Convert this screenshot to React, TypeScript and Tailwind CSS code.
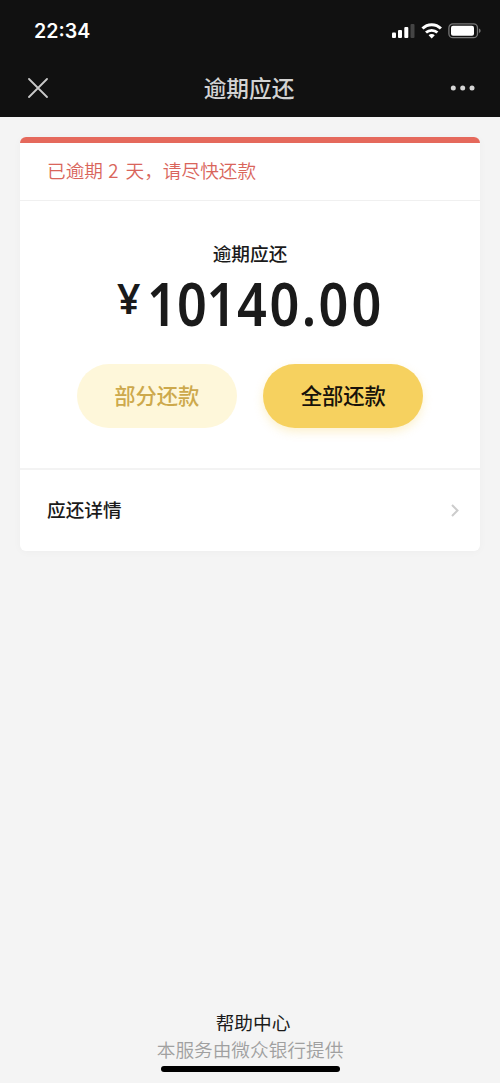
const amount = [
  { char: '1', className: 'w-[30px]' },
  { char: '0', className: 'w-[30px]' },
  { char: '1', className: 'w-[29px]' },
  { char: '4', className: 'w-[32px]' },
  { char: '0', className: 'w-[33px]' },
  { char: '.', className: 'w-[16px]' },
  { char: '0', className: 'w-[33px]' },
  { char: '0', className: 'w-[33px]' },
]

const StatusBar = () => (
  <div className="flex h-[60px] items-center justify-between pl-[34px] pr-[18px] pt-[2px] text-white">
    <span className="pt-[2px] font-['Inter',sans-serif] text-[19.6px] font-semibold leading-none">22:34</span>
    <svg width="92" height="16" viewBox="0 0 92 16" fill="none">
      {/* 信号 */}
      <rect x="2" y="9.5" width="4" height="5.5" rx="1" fill="#fff" />
      <rect x="8" y="7" width="4" height="8" rx="1" fill="#fff" />
      <rect x="14.3" y="4" width="4" height="11" rx="1" fill="#fff" />
      <rect x="20.5" y="1" width="4" height="14" rx="1" fill="#444" />
      {/* Wi-Fi */}
      <path d="M32.5 5.5a13 13 0 0 1 18.4 0" stroke="#fff" strokeWidth="3" />
      <path d="M36 9.6a8.2 8.2 0 0 1 11.4 0" stroke="#fff" strokeWidth="2.8" />
      <path d="M38.6 12.2a4.4 4.4 0 0 1 6.2 0l-3.1 3.2z" fill="#fff" />
      {/* 电池 */}
      <rect x="58.9" y="0.9" width="28.6" height="13.8" rx="4" stroke="#777" strokeWidth="1.3" />
      <rect x="61" y="2.8" width="23" height="10" rx="2" fill="#fff" />
      <path d="M89 5.5c1.2.5 1.6 1.3 1.6 2.3s-.4 1.8-1.6 2.3z" fill="#777" />
    </svg>
  </div>
)

const NavBar = () => (
  <div className="flex h-[57px] items-center justify-between pb-[2px] pl-7 pr-6">
    <svg width="20" height="20" viewBox="0 0 20 20" stroke="#c9c9c9" strokeWidth="1.8" strokeLinecap="round">
      <path d="M1 1l18 18M19 1L1 19" />
    </svg>
    <h1 className="pt-px text-[22.7px] font-medium leading-none text-[#d3d3d3]">逾期应还</h1>
    <svg width="26" height="6" viewBox="0 0 26 6" fill="#d5d5d5">
      <circle cx="3.3" cy="3" r="2.5" />
      <circle cx="12.7" cy="3" r="2.5" />
      <circle cx="22" cy="3" r="2.5" />
    </svg>
  </div>
)

export default function App() {
  return (
    <div className="flex h-[1083px] w-[500px] flex-col bg-[#f4f4f4] font-['Noto_Sans_CJK_SC',sans-serif] text-[#1a1a1a]">
      <header className="bg-[#111111]">
        <StatusBar />
        <NavBar />
      </header>

      <main className="mx-5 mt-5 flex h-[414px] flex-col overflow-hidden rounded-[6px] bg-white shadow-[0_1px_8px_rgba(0,0,0,0.03)]">
        <div className="h-[6px] shrink-0 bg-[#e5695c]" />
        <p className="flex h-[58px] shrink-0 items-center whitespace-pre border-b-[1.5px] border-[#f0f0f0] pb-[2px] pl-[27px] text-[18.67px] font-[350] leading-none text-[#d9655b]">
          已逾期 <span className="ml-[1px] mr-[3px]">2</span> 天，请尽快还款
        </p>

        <section className="flex h-[269px] shrink-0 flex-col items-center border-b-2 border-[#f3f3f3] pt-[40px]">
          <h2 className="text-[18.67px] font-medium leading-[24px]">逾期应还</h2>
          <div className="mt-[2px] flex h-[72px] items-center font-['Noto_Sans',sans-serif] font-semibold">
            <span className="mb-[10px] mr-2 w-[22px] text-[41px] leading-none">¥</span>
            {amount.map((item, i) => (
              <span
                key={i}
                className={`flex scale-x-[0.87] justify-center text-[60px] leading-none ${item.className}`}
              >
                {item.char}
              </span>
            ))}
          </div>
          <div className="mt-[25px] flex gap-[26.5px]">
            <button className="h-16 w-40 rounded-full bg-[#fef7da] pb-[2px] text-[21.3px] font-medium text-[#cda94c]">
              部分还款
            </button>
            <button className="h-16 w-40 rounded-full bg-[#f6d15f] pb-[2px] text-[21.3px] font-medium text-[#17110a] shadow-[0_4px_10px_rgba(246,209,95,0.3)]">
              全部还款
            </button>
          </div>
        </section>

        <div className="flex flex-1 items-center justify-between pl-[27px] pr-[21px]">
          <span className="pb-[2px] text-[18.67px] font-medium leading-none">应还详情</span>
          <svg width="8" height="13" viewBox="0 0 8 13" fill="none" stroke="#cccccc" strokeWidth="2">
            <path d="M1 1l5.5 5.5L1 12" />
          </svg>
        </div>
      </main>

      <footer className="mt-auto flex flex-col items-center pb-[11px] text-[18.67px]">
        <a className="pl-[6px] leading-[27px]">帮助中心</a>
        <p className="font-[350] leading-[27px] text-[#a0a0a0]">本服务由微众银行提供</p>
        <div className="mt-[4px] h-[6px] w-[179px] rounded-full bg-black" />
      </footer>
    </div>
  )
}
